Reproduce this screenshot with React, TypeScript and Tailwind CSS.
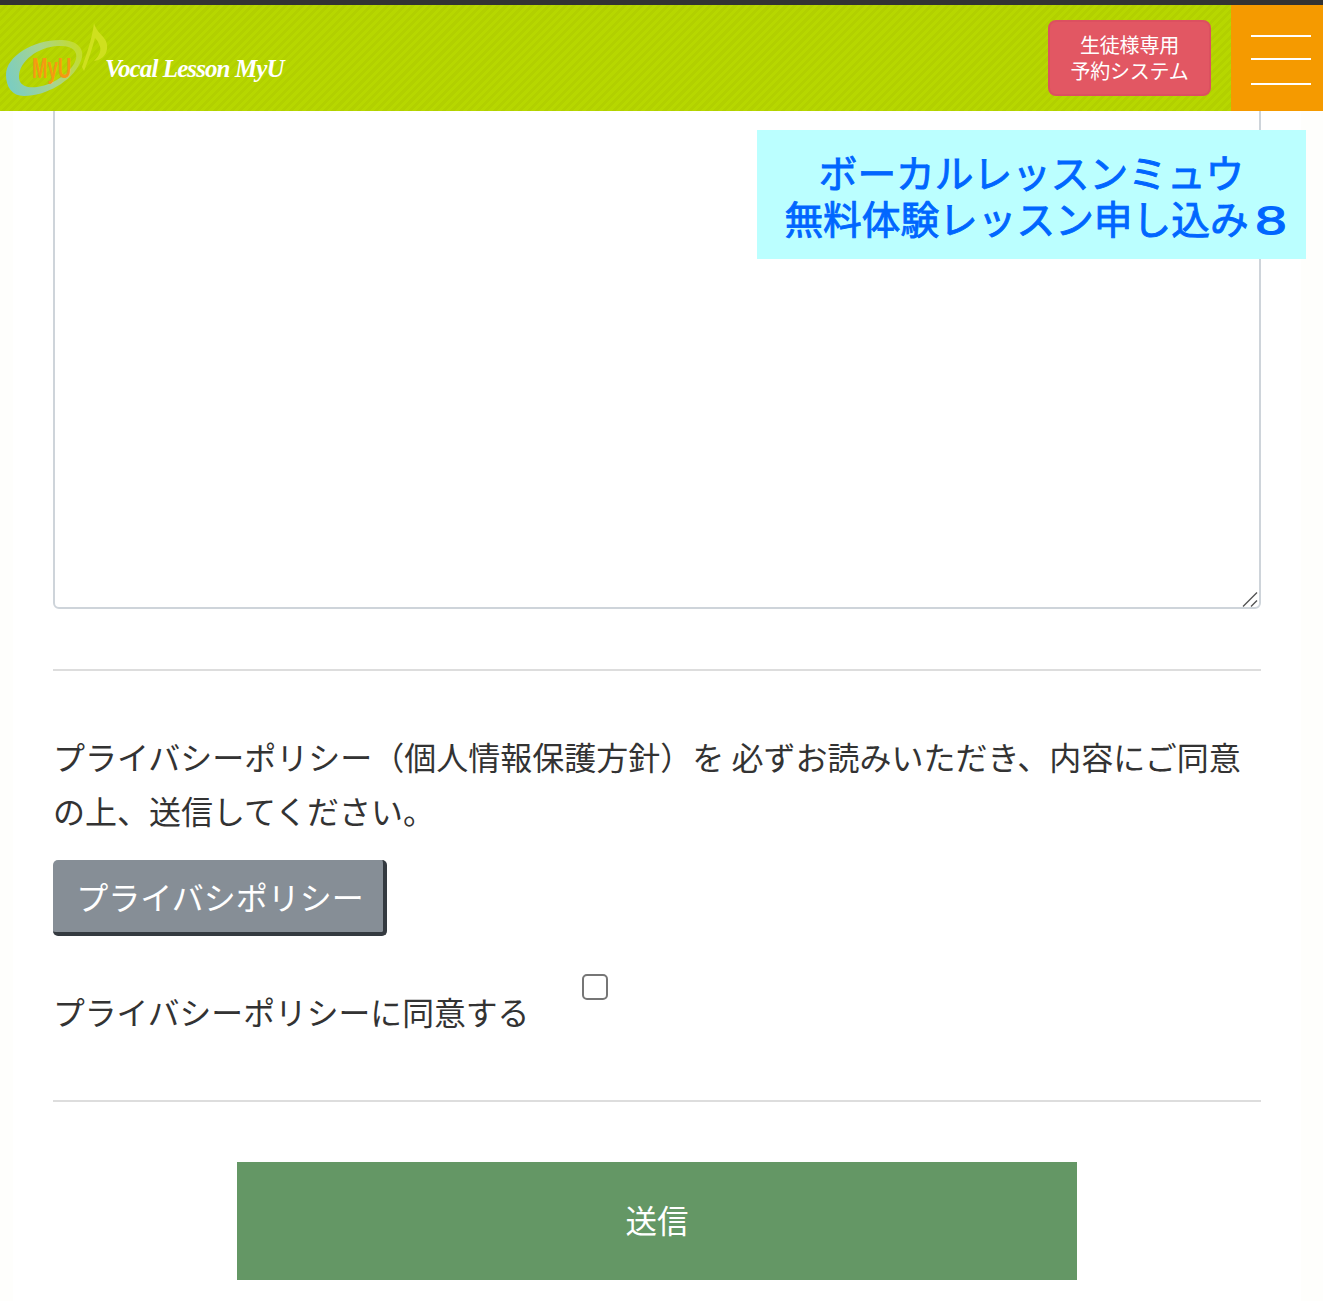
import React from 'react';

const jp = "font-['Noto_Sans_CJK_JP','Noto_Sans',sans-serif]";

function Logo() {
  return (
    <div className="flex items-center h-full">
      <svg width="112" height="106" viewBox="0 0 112 106" className="shrink-0">
        <defs>
          <linearGradient id="ring" x1="0" y1="0.6" x2="1" y2="0.3">
            <stop offset="0" stopColor="#7ccdc0" />
            <stop offset="0.55" stopColor="#a9d48c" />
            <stop offset="1" stopColor="#c4dc2c" />
          </linearGradient>
        </defs>
        {/* ring */}
        <path
          d="M6 70C6 50 36 34 62 35C80 36 86 46 80 58C72 76 46 91 24 91C12 91 6 82 6 70ZM19 72C19 82 30 84 42 81C58 77 73 65 76 54C78 46 72 40 58 41C38 42 19 56 19 72Z"
          fill="url(#ring)"
          fillRule="evenodd"
        />
        {/* note */}
        <path
          d="M82 62C87 48 92 34 94 18C97 30 109 32 107 44C106 51 101 55 94 56C100 50 102 45 99 39C98 36 96 34 95 33C92 44 88 56 84 66Z"
          fill="#cfe01e"
        />
        <text
          x="32"
          y="73"
          fill="#f59a12"
          fontSize="30"
          fontWeight="700"
          fontFamily="'Liberation Sans', sans-serif"
          transform="translate(32 0) scale(0.62 1) translate(-32 0)"
        >
          MyU
        </text>
      </svg>
      <span className="-ml-[7px] mt-[20px] font-['Liberation_Serif',serif] italic font-bold text-[25px] tracking-[-0.9px] text-white leading-none whitespace-nowrap">
        Vocal Lesson MyU
      </span>
    </div>
  );
}

function Header() {
  return (
    <header className="relative z-10 border-t-[5px] border-[#333333] h-[111px] flex justify-between bg-[#b6d600] bg-[repeating-linear-gradient(135deg,#b7d700_0px,#b7d700_3px,#b2d000_3px,#b2d000_6px)]">
      <Logo />
      <div className="flex items-stretch">
        <a className={`${jp} mt-[15px] mb-[15px] mr-[20px] w-[163px] rounded-[8px] border-2 border-[#dc5060] bg-[#e25763] flex flex-col items-center justify-center text-white text-[20px] leading-[26px] tracking-[-0.2px]`}>
          <span>生徒様専用</span>
          <span>予約システム</span>
        </a>
        <button className="relative w-[92px] bg-[#f59a00]">
          <span className="absolute left-[20px] top-[30px] w-[60px] h-[2px] bg-white" />
          <span className="absolute left-[20px] top-[53px] w-[60px] h-[2px] bg-white" />
          <span className="absolute left-[20px] top-[78px] w-[60px] h-[2px] bg-white" />
        </button>
      </div>
    </header>
  );
}

export default function App() {
  return (
    <div className={`${jp} relative w-full h-[1301px] overflow-hidden bg-[#fefefc] text-[#333333]`}>
      <Header />

      <div className="absolute z-20 left-[757px] top-[130px] w-[549px] h-[129px] bg-[#bbffff] text-[#0066ff] text-[38.7px] leading-[45px] text-center pt-[19px] [-webkit-text-stroke:0.9px_#0066ff]">
        <div>ボーカルレッスンミュウ</div>
        <div className="whitespace-nowrap pl-[8px] mt-[1px]">
          無料体験レッスン申し込み<span className="inline-block origin-left scale-x-[1.4] translate-x-[5px] font-['DejaVu_Sans',sans-serif] text-[38px] w-[38px] text-left leading-none">8</span>
        </div>
      </div>

      <main className="ml-[13px] w-[1288px] h-[1200px] px-[40px] bg-white">
        <div className="relative -mt-[10px]">
          <textarea className="block w-full h-[508px] border-2 border-[#ced4da] rounded-[6px] bg-white outline-none resize-none" />
          <svg width="16" height="16" viewBox="0 0 16 16" className="absolute right-[3px] bottom-[2px]">
            <path d="M1 15.5L15 1.5M9 15.5L15 9.5" stroke="#555555" strokeWidth="1.4" fill="none" />
          </svg>
        </div>
        <hr className="mt-[60px] border-t-2 border-[#dddddd]" />

        <p className="mt-[58px] text-[32px] leading-[54px]">
          プライバシーポリシー（個人情報保護方針）を 必ずお読みいただき、内容にご同意の上、送信してください。
        </p>

        <button className="mt-[23px] block w-[334px] h-[76px] pl-[4px] rounded-[5px] bg-[#868e96] border-r-4 border-b-4 border-[#343a40] text-white text-[32px] leading-none">
          プライバシポリシー
        </button>

        <div className="mt-[38px] flex items-start h-[80px]">
          <label className="mt-[10px] text-[31.8px] leading-[54px]">プライバシーポリシーに同意する</label>
          <input type="checkbox" className="ml-[53px] w-[26px] h-[26px] appearance-none bg-white border-2 border-[#767676] rounded-[5px]" />
        </div>

        <hr className="mt-[46px] border-t-2 border-[#dddddd]" />

        <div className="mt-[60px] flex justify-center">
          <button className="w-[840px] h-[118px] pb-[2px] bg-[#649765] text-white text-[31.5px]">送信</button>
        </div>
      </main>
    </div>
  );
}
